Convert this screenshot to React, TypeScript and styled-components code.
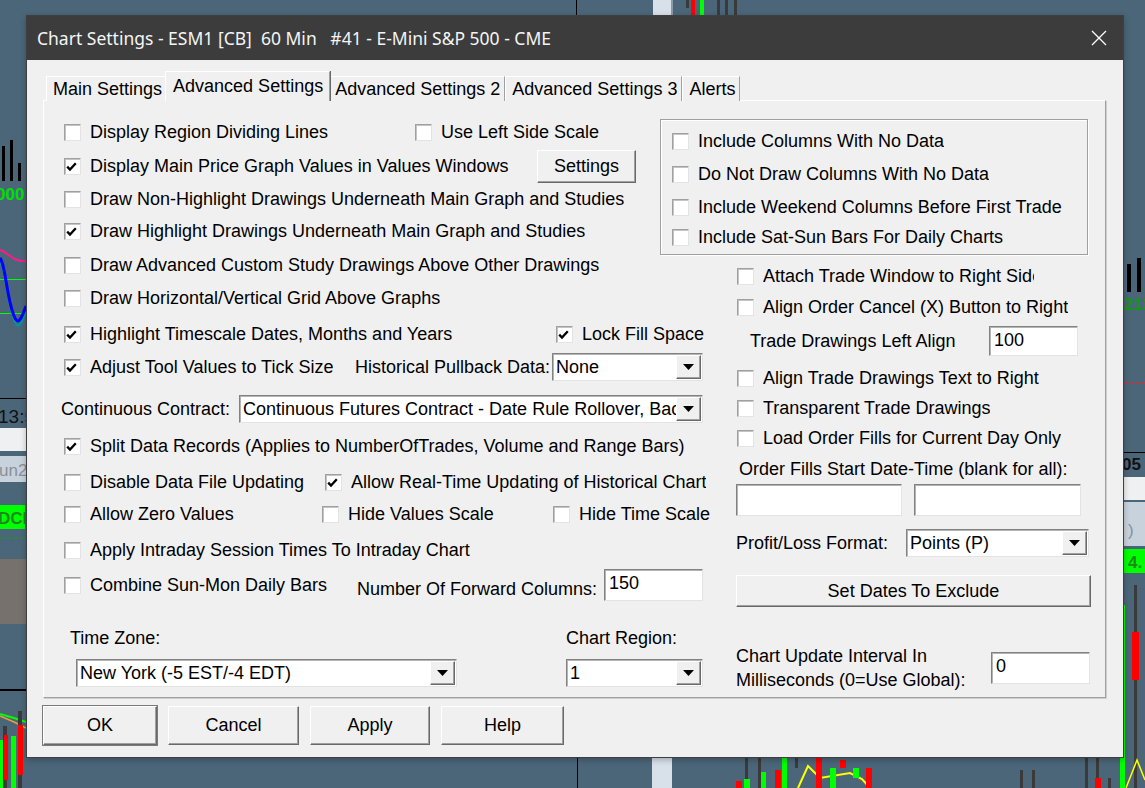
import React from "react"
import styled, { createGlobalStyle } from "styled-components"

const GlobalStyle = createGlobalStyle`
	html, body { margin:0; padding:0; }
	body {
		background:#4b6679;
		font-family:"Liberation Sans", Arial, sans-serif;
		overflow:hidden;
	}
`

function ChartBackdrop() {
	return <Backdrop width="1145" height="788" viewBox="0 0 1145 788">
		{/* top */}
		<rect x="576" y="0" width="1" height="15" fill="#000"/>
		<rect x="653" y="0" width="20" height="15" fill="#d8e0ea"/>
		<rect x="671" y="0" width="2" height="15" fill="#8a98a8"/>
		<rect x="686" y="0" width="3" height="8" fill="#3a3a3a"/>
		<rect x="691" y="0" width="4" height="15" fill="#ff0000"/>
		<rect x="700" y="0" width="4" height="15" fill="#00ff00"/>
		<rect x="717" y="0" width="3" height="15" fill="#3a3a3a"/>
		<rect x="725" y="0" width="3" height="15" fill="#3a3a3a"/>
		<rect x="734" y="0" width="3" height="15" fill="#3a3a3a"/>
		{/* left edge */}
		<rect x="2" y="146" width="3" height="35" fill="#000"/>
		<rect x="10" y="140" width="3" height="41" fill="#000"/>
		<rect x="18" y="163" width="3" height="18" fill="#000"/>
		<text x="-4" y="200" fill="#00e000" fontSize="17" fontWeight="bold" fontFamily="Liberation Sans">000</text>
		<path d="M0 250 C8 252 12 262 26 261" stroke="#ff1a8c" strokeWidth="2" fill="none"/>
		<rect x="0" y="279" width="26" height="1" fill="#00ff00"/>
		<rect x="0" y="313" width="26" height="1" fill="#00ff00"/>
		<path d="M0 262 C6 270 6 300 14 320 C18 330 21 325 26 312" stroke="#009999" strokeWidth="2" fill="none"/>
		<path d="M0 258 C6 266 6 296 14 316 C18 326 21 320 26 306" stroke="#0000ff" strokeWidth="3" fill="none"/>
		<rect x="0" y="398" width="26" height="1" fill="#000"/>
		<text x="-2" y="423" fill="#111" fontSize="19" fontFamily="Liberation Sans">13:5</text>
		<rect x="0" y="428" width="26" height="23" fill="#eef0f2"/>
		<rect x="0" y="456" width="26" height="26" fill="#c8d2dd"/>
		<text x="-1" y="476" fill="#8a9098" fontSize="17" fontFamily="Liberation Sans">un2</text>
		<rect x="0" y="505" width="25" height="24" fill="#00ff00"/>
		<text x="-2" y="524" fill="#1a8a1a" fontSize="17" fontWeight="bold" fontFamily="Liberation Sans">DCI</text>
		<line x1="0" y1="538" x2="26" y2="538" stroke="#00aa00" strokeDasharray="4 3"/>
		<rect x="0" y="559" width="26" height="65" fill="#77716e"/>
		<rect x="0" y="689" width="26" height="2" fill="#000"/>
		<path d="M0 714 L14 718 L26 722" stroke="#00ff00" strokeWidth="2" fill="none"/>
		<path d="M0 716 L14 722 L26 728" stroke="#e8a040" strokeWidth="1.5" fill="none"/>
		<rect x="0" y="740" width="3" height="48" fill="#00ff00"/>
		<rect x="3" y="726" width="4" height="62" fill="#3a3a3a"/>
		<rect x="4" y="735" width="4" height="45" fill="#ff0000"/>
		<rect x="11" y="736" width="5" height="52" fill="#00ff00"/>
		<rect x="18" y="711" width="4" height="77" fill="#3a3a3a"/>
		<rect x="18" y="725" width="5" height="50" fill="#ff0000"/>
		{/* right edge */}
		<rect x="1127" y="264" width="4" height="28" fill="#000"/>
		<rect x="1137" y="258" width="4" height="34" fill="#000"/>
		<text x="1124" y="310" fill="#129912" fontSize="17" fontWeight="bold" fontFamily="Liberation Sans">213</text>
		<line x1="1124" y1="383" x2="1145" y2="383" stroke="#ff2020" strokeDasharray="3 3"/>
		<rect x="1124" y="452" width="21" height="1" fill="#000"/>
		<text x="1122" y="470" fill="#111" fontSize="17" fontWeight="bold" fontFamily="Liberation Sans">05</text>
		<rect x="1124" y="477" width="21" height="23" fill="#eef0f2"/>
		<rect x="1124" y="502" width="21" height="44" fill="#c8d2dd"/>
		<text x="1128" y="536" fill="#8a9098" fontSize="17" fontFamily="Liberation Sans">)</text>
		<rect x="1124" y="549" width="21" height="24" fill="#00ff00"/>
		<text x="1128" y="568" fill="#1a8a1a" fontSize="17" fontWeight="bold" fontFamily="Liberation Sans">4.</text>
		<rect x="1134" y="585" width="3" height="203" fill="#3a3a3a"/>
		<rect x="1132" y="632" width="7" height="48" fill="#ff0000"/>
		<rect x="1120" y="605" width="5" height="183" fill="#00ff00"/>
		<path d="M1126 788 L1137 760 L1145 780" stroke="#ffff00" strokeWidth="1.5" fill="none"/>
		{/* bottom */}
		<rect x="577" y="758" width="1" height="30" fill="#000"/>
		<rect x="652" y="758" width="20" height="30" fill="#d8e0ea"/>
		<rect x="745" y="758" width="3" height="30" fill="#3a3a3a"/>
		<rect x="744" y="779" width="6" height="9" fill="#00ff00"/>
		<rect x="736" y="781" width="6" height="7" fill="#ff0000"/>
		<rect x="760" y="772" width="6" height="16" fill="#00ff00"/>
		<rect x="758" y="758" width="3" height="30" fill="#3a3a3a"/>
		<rect x="775" y="770" width="6" height="18" fill="#ff0000"/>
		<rect x="782" y="758" width="5" height="30" fill="#00ff00"/>
		<rect x="795" y="758" width="3" height="10" fill="#3a3a3a"/>
		<path d="M798 788 L808 766 L820 778 L850 773 L862 779 L870 788" stroke="#ffff00" strokeWidth="2" fill="none"/>
		<rect x="816" y="758" width="6" height="30" fill="#ff0000"/>
		<rect x="830" y="768" width="6" height="20" fill="#00ff00"/>
		<rect x="840" y="760" width="6" height="8" fill="#ff0000"/>
		<rect x="853" y="768" width="6" height="10" fill="#00ff00"/>
		<rect x="866" y="768" width="6" height="20" fill="#ff0000"/>
		<rect x="1020" y="770" width="3" height="18" fill="#3a3a3a"/>
		<rect x="1032" y="770" width="3" height="18" fill="#3a3a3a"/>
		<rect x="1085" y="758" width="3" height="30" fill="#3a3a3a"/>
		<rect x="1096" y="758" width="3" height="30" fill="#3a3a3a"/>
		<rect x="1095" y="778" width="6" height="10" fill="#ff0000"/>
		<rect x="1108" y="778" width="3" height="10" fill="#3a3a3a"/>
	</Backdrop>
}

type CheckProps = {
	label: string
	checked?: boolean
	clip?: number
}

function Check({ label, checked, clip }: CheckProps) {
	return <CheckWrap>
		<Box>
			{checked && <svg width="11" height="10" viewBox="0 0 11 10">
				<path d="M1.2 4.6 L4 7.6 L9.8 1.2" stroke="#000" strokeWidth="2.3" fill="none"/>
			</svg>}
		</Box>
		<CheckText style={clip ? { maxWidth: clip } : undefined}>{label}</CheckText>
	</CheckWrap>
}

function Select({ value, w }: { value: string; w: number }) {
	return <SelectField $w={w}>
		<SelectValue>{value}</SelectValue>
		<ArrowBtn>
			<svg width="11" height="6" viewBox="0 0 11 6"><path d="M0 0 H11 L5.5 6 Z" fill="#000"/></svg>
		</ArrowBtn>
	</SelectField>
}

export default function App() {
	return <Page>
		<GlobalStyle/>
		<ChartBackdrop/>
		<Dialog>
			<TitleBar>
				<Title>{"Chart Settings - ESM1 [CB]  60 Min   #41 - E-Mini S&P 500 - CME"}</Title>
				<svg width="16" height="16" viewBox="0 0 16 16">
					<path d="M1 1 L15 15 M15 1 L1 15" stroke="#fff" strokeWidth="1.3"/>
				</svg>
			</TitleBar>
			<Body>
				<Tabs>
					<Tab>Main Settings</Tab>
					<Tab $active>Advanced Settings</Tab>
					<Tab>Advanced Settings 2</Tab>
					<Tab>Advanced Settings 3</Tab>
					<Tab>Alerts</Tab>
				</Tabs>
				<Panel>
					<Column>
						<Row>
							<Cell $w={351}><Check label="Display Region Dividing Lines"/></Cell>
							<Check label="Use Left Side Scale"/>
						</Row>
						<Row $mt={4}>
							<Cell $w={473}><Check checked label="Display Main Price Graph Values in Values Windows"/></Cell>
							<Button $w={99} $h={33}>Settings</Button>
						</Row>
						<Row $mt={3}><Check label="Draw Non-Highlight Drawings Underneath Main Graph and Studies"/></Row>
						<Row $mt={2}><Check checked label="Draw Highlight Drawings Underneath Main Graph and Studies"/></Row>
						<Row $mt={4}><Check label="Draw Advanced Custom Study Drawings Above Other Drawings"/></Row>
						<Row $mt={3}><Check label="Draw Horizontal/Vertical Grid Above Graphs"/></Row>
						<Row $mt={6}>
							<Cell $w={492}><Check checked label="Highlight Timescale Dates, Months and Years"/></Cell>
							<Check checked label="Lock Fill Space"/>
						</Row>
						<Row $mt={3}>
							<Cell $w={291}><Check checked label="Adjust Tool Values to Tick Size"/></Cell>
							<Cell $w={197}><Label>Historical Pullback Data:</Label></Cell>
							<Select w={151} value="None"/>
						</Row>
						<Row $mt={12}>
							<Cell $w={175}><Label $shift={-3}>Continuous Contract:</Label></Cell>
							<Select w={464} value="Continuous Futures Contract - Date Rule Rollover, Back Adjusted"/>
						</Row>
						<Row $mt={7}><Check checked label="Split Data Records (Applies to NumberOfTrades, Volume and Range Bars)"/></Row>
						<Row $mt={6}>
							<Cell $w={261}><Check label="Disable Data File Updating"/></Cell>
							<Check checked label="Allow Real-Time Updating of Historical Chart"/>
						</Row>
						<Row $mt={2}>
							<Cell $w={258}><Check label="Allow Zero Values"/></Cell>
							<Cell $w={231}><Check label="Hide Values Scale"/></Cell>
							<Check label="Hide Time Scale"/>
						</Row>
						<Row $mt={6}><Check label="Apply Intraday Session Times To Intraday Chart"/></Row>
						<Row $mt={5}>
							<Cell $w={293}><Check label="Combine Sun-Mon Daily Bars"/></Cell>
							<Cell $w={247}><Label $shift={0} $dy={4}>Number Of Forward Columns:</Label></Cell>
							<TextBox $w={99} $h={32}>150</TextBox>
						</Row>
						<Row $mt={23}>
							<Cell $w={502}><Label $shift={6}>Time Zone:</Label></Cell>
							<Label>Chart Region:</Label>
						</Row>
						<Row $mt={5}>
							<Cell $w={502}><Indent $l={12}><Select w={381} value="New York (-5 EST/-4 EDT)"/></Indent></Cell>
							<Select w={137} value="1"/>
						</Row>
					</Column>
					<Column>
						<GroupBox>
							<Row><Check label="Include Columns With No Data"/></Row>
							<Row $mt={3}><Check label="Do Not Draw Columns With No Data"/></Row>
							<Row $mt={3}><Check label="Include Weekend Columns Before First Trade"/></Row>
							<Row><Check label="Include Sat-Sun Bars For Daily Charts"/></Row>
						</GroupBox>
						<Row $mt={6}><Indent $l={1}><Check label="Attach Trade Window to Right Side" clip={271}/></Indent></Row>
						<Row $mt={1}><Indent $l={1}><Check label="Align Order Cancel (X) Button to Right"/></Indent></Row>
						<Row $mt={4}>
							<Cell $w={253}><Label $shift={14}>Trade Drawings Left Align</Label></Cell>
							<TextBox $w={89} $h={30}>100</TextBox>
						</Row>
						<Row $mt={7}><Indent $l={1}><Check label="Align Trade Drawings Text to Right"/></Indent></Row>
						<Row><Indent $l={1}><Check label="Transparent Trade Drawings"/></Indent></Row>
						<Row><Indent $l={1}><Check label="Load Order Fills for Current Day Only"/></Indent></Row>
						<Row $mt={1}><Label $shift={3}>Order Fills Start Date-Time (blank for all):</Label></Row>
						<Row $h={32}>
							<Cell $w={178}><TextBox $w={166} $h={32}/></Cell>
							<TextBox $w={167} $h={32}/>
						</Row>
						<Row $mt={13} $h={28}>
							<Cell $w={170}><Label>Profit/Loss Format:</Label></Cell>
							<Select w={183} value="Points (P)"/>
						</Row>
						<Row $mt={18} $h={32}><Button $w={355} $h={32}>Set Dates To Exclude</Button></Row>
						<Row $mt={37} $h={48}>
							<Cell $w={255}><Label $lines>Chart Update Interval In<br/>Milliseconds (0=Use Global):</Label></Cell>
							<TextBox $w={99} $h={32}>0</TextBox>
						</Row>
					</Column>
				</Panel>
				<ButtonBar>
					<Button $w={114} $h={39} $default>OK</Button>
					<Button $w={131} $h={39}>Cancel</Button>
					<Button $w={120} $h={39}>Apply</Button>
					<Button $w={123} $h={39}>Help</Button>
				</ButtonBar>
			</Body>
		</Dialog>
	</Page>
}

const Page = styled("div")`
	position:relative;
	width:1145px;
	height:788px;
	box-sizing:border-box;
	padding:15px 0 0 26px;
	overflow:hidden;
`
const Backdrop = styled("svg")`
	position:absolute;
	left:0;
	top:0;
`
const Dialog = styled("div")`
	position:relative;
	z-index:1;
	width:1098px;
	height:743px;
	box-sizing:border-box;
	border:1px solid #3f3f3f;
	background:#f0f0f0;
	display:flex;
	flex-direction:column;
	box-shadow:0 2px 6px rgba(0,0,0,0.25);
`
const TitleBar = styled("div")`
	height:44px;
	flex:none;
	background:#3c3c3c;
	display:flex;
	align-items:center;
	justify-content:space-between;
	padding:0 16px 0 10px;
	color:#fff;
`
const Title = styled("div")`
	font-family:"Noto Sans", "Open Sans", sans-serif;
	font-size:17.5px;
	white-space:pre;
	color:#f4f4f4;
`
const Body = styled("div")`
	flex:1;
	display:flex;
	flex-direction:column;
	padding:11px 17px 12px 16px;
	font-size:18px;
	color:#000;
`
const Tabs = styled("div")`
	display:flex;
	align-items:flex-end;
	height:30px;
	padding-left:3px;
	position:relative;
	z-index:2;
	margin-bottom:-1px;
`
const Tab = styled("div")<{ $active?: boolean }>`
	height:${p => p.$active ? 30 : 25}px;
	box-sizing:border-box;
	display:flex;
	align-items:center;
	padding:${p => p.$active ? "0 6px 1px 7px" : "0 4px 0 6px"};
	margin:${p => p.$active ? "0 -2px" : "0"};
	background:#f0f0f0;
	border-top:1px solid #fff;
	border-left:1px solid #fff;
	border-right:1px solid #a0a0a0;
	box-shadow:${p => p.$active ? "1px 0 0 #696969" : "none"};
	position:relative;
	z-index:${p => p.$active ? 2 : 1};
	white-space:nowrap;
`
const Panel = styled("div")`
	height:598px;
	box-sizing:border-box;
	border-top:1px solid #fff;
	border-left:1px solid #fff;
	border-right:1px solid #a0a0a0;
	border-bottom:1px solid #a0a0a0;
	box-shadow:1px 1px 0 #cfcfcf;
	padding:16px 0 0 20px;
	display:grid;
	grid-template-columns:672px 356px;
`
const Column = styled("div")`
	display:flex;
	flex-direction:column;
	min-width:0;
`
const Row = styled("div")<{ $mt?: number; $h?: number }>`
	display:flex;
	align-items:center;
	height:${p => p.$h ?? 30}px;
	margin-top:${p => p.$mt ?? 0}px;
	white-space:nowrap;
`
const Cell = styled("div")<{ $w: number }>`
	width:${p => p.$w}px;
	flex:none;
	display:flex;
	align-items:center;
`
const Indent = styled("div")<{ $l: number }>`
	padding-left:${p => p.$l}px;
	display:flex;
	align-items:center;
`
const CheckWrap = styled("label")`
	display:flex;
	align-items:center;
	gap:9px;
`
const Box = styled("span")`
	width:17px;
	height:17px;
	box-sizing:border-box;
	flex:none;
	background:#fff;
	border:1px solid;
	border-color:#a0a0a0 #e3e3e3 #e3e3e3 #a0a0a0;
	box-shadow:inset 1px 1px 0 #c4c4c4;
	display:flex;
	align-items:flex-start;
	padding:3px 0 0 1px;
`
const CheckText = styled("span")`
	overflow:hidden;
	white-space:nowrap;
`
const Label = styled("span")<{ $shift?: number; $dy?: number; $lines?: boolean }>`
	margin-left:${p => p.$shift ?? 0}px;
	position:relative;
	top:${p => p.$dy ?? 0}px;
	line-height:${p => p.$lines ? "24px" : "normal"};
	white-space:nowrap;
`
const SelectField = styled("div")<{ $w: number }>`
	width:${p => p.$w}px;
	height:28px;
	flex:none;
	box-sizing:border-box;
	background:#fff;
	border:1px solid;
	border-color:#828282 #e3e3e3 #e3e3e3 #828282;
	box-shadow:inset 1px 1px 0 #b4b4b4;
	display:flex;
	align-items:stretch;
	padding:1px;
`
const SelectValue = styled("div")`
	flex:1;
	min-width:0;
	overflow:hidden;
	white-space:nowrap;
	padding-left:2px;
	display:flex;
	align-items:center;
`
const ArrowBtn = styled("div")`
	width:25px;
	flex:none;
	box-sizing:border-box;
	background:#f0f0f0;
	border:1px solid;
	border-color:#fff #696969 #696969 #fff;
	box-shadow:inset -1px -1px 0 #a0a0a0;
	display:flex;
	align-items:center;
	justify-content:center;
`
const TextBox = styled("div")<{ $w: number; $h: number }>`
	width:${p => p.$w}px;
	height:${p => p.$h}px;
	flex:none;
	box-sizing:border-box;
	background:#fff;
	border:1px solid;
	border-color:#828282 #e3e3e3 #e3e3e3 #828282;
	box-shadow:inset 1px 1px 0 #b4b4b4;
	padding:3px 0 0 4px;
`
const Button = styled("div")<{ $w: number; $h: number; $default?: boolean }>`
	width:${p => p.$w}px;
	height:${p => p.$h}px;
	flex:none;
	box-sizing:border-box;
	background:#f0f0f0;
	border:1px solid;
	border-color:#fff #696969 #696969 #fff;
	box-shadow:inset -1px -1px 0 #a0a0a0${p => p.$default ? ", 0 0 0 1px #7a7a7a" : ""};
	display:flex;
	align-items:center;
	justify-content:center;
`
const GroupBox = styled("div")`
	margin:2px 0 0 -76px;
	width:428px;
	height:136px;
	box-sizing:border-box;
	border:1px solid #a0a0a0;
	box-shadow:inset 1px 1px 0 #fff, 1px 1px 0 #fff;
	padding:6px 0 0 11px;
`
const ButtonBar = styled("div")`
	display:flex;
	gap:11px;
	margin-top:8px;
`
